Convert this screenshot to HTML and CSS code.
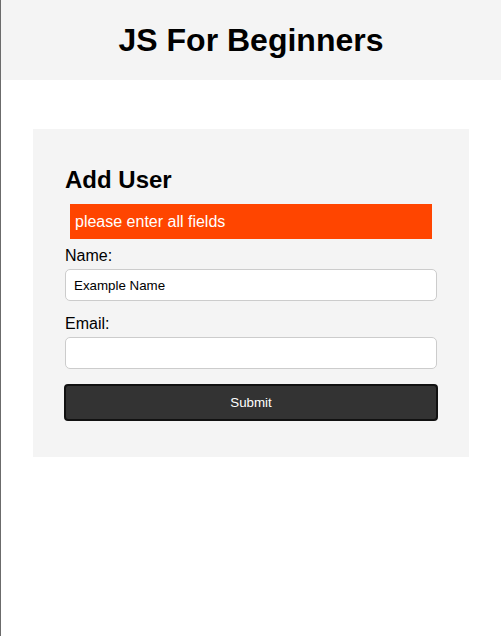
FILE: index.html
```html
<!DOCTYPE html>
<html lang="en">
<head>
<meta charset="utf-8">
<title>JS For Beginners</title>
<link rel="stylesheet" href="styles.css">
</head>
<body>
<header class="site-header">
  <h1 class="site-title">JS For Beginners</h1>
</header>
<main class="container">
  <section class="card">
    <h2 class="card-title">Add User</h2>
    <div class="msg error">please enter all fields</div>
    <form class="form">
      <label class="label" for="name">Name:</label>
      <input class="input" type="text" id="name" value="Example Name">
      <label class="label label-gap" for="email">Email:</label>
      <input class="input" type="text" id="email">
      <button class="btn" type="button">Submit</button>
    </form>
  </section>
</main>
</body>
</html>
```
FILE: styles.css
```css
html {
  border-left: 1px solid #6b6b6b;
  min-height: 100%;
  box-sizing: border-box;
}
* { box-sizing: border-box; }
body {
  margin: 0;
  font-family: "Liberation Sans", Arial, sans-serif;
  color: #000;
  background: #fff;
}
.site-header {
  height: 80px;
  background: #f4f4f4;
  display: flex;
  align-items: center;
  justify-content: center;
}
.site-title {
  margin: 0;
  font-size: 32px;
  font-weight: bold;
  line-height: 37px;
}
.container {
  padding: 49px 32px 0;
}
.card {
  background: #f4f4f4;
  padding: 37px 32px 36px;
}
.card-title {
  margin: 0;
  font-size: 24px;
  line-height: 28px;
  font-weight: bold;
}
.msg {
  margin: 10px 5px 8px;
  height: 35px;
  padding: 0 5px;
  display: flex;
  align-items: center;
  font-size: 16px;
  color: #fff;
}
.error { background: #ff4500; }
.form {
  display: flex;
  flex-direction: column;
}
.label {
  display: block;
  font-size: 16px;
  line-height: 18px;
  margin-bottom: 4px;
}
.label-gap { margin-top: 14px; }
.input {
  height: 32px;
  width: 100%;
  border: 1px solid #ccc;
  border-radius: 5px;
  padding: 0 8px;
  font-family: "Liberation Sans", Arial, sans-serif;
  font-size: 13.333px;
  color: #000;
  background: #fff;
}
.btn {
  margin: 15px -1px 0;
  width: calc(100% + 2px);
  height: 37px;
  background: #333;
  color: #fff;
  border: 2px solid #111;
  border-radius: 4px;
  font-family: "Liberation Sans", Arial, sans-serif;
  font-size: 13.333px;
}
```
